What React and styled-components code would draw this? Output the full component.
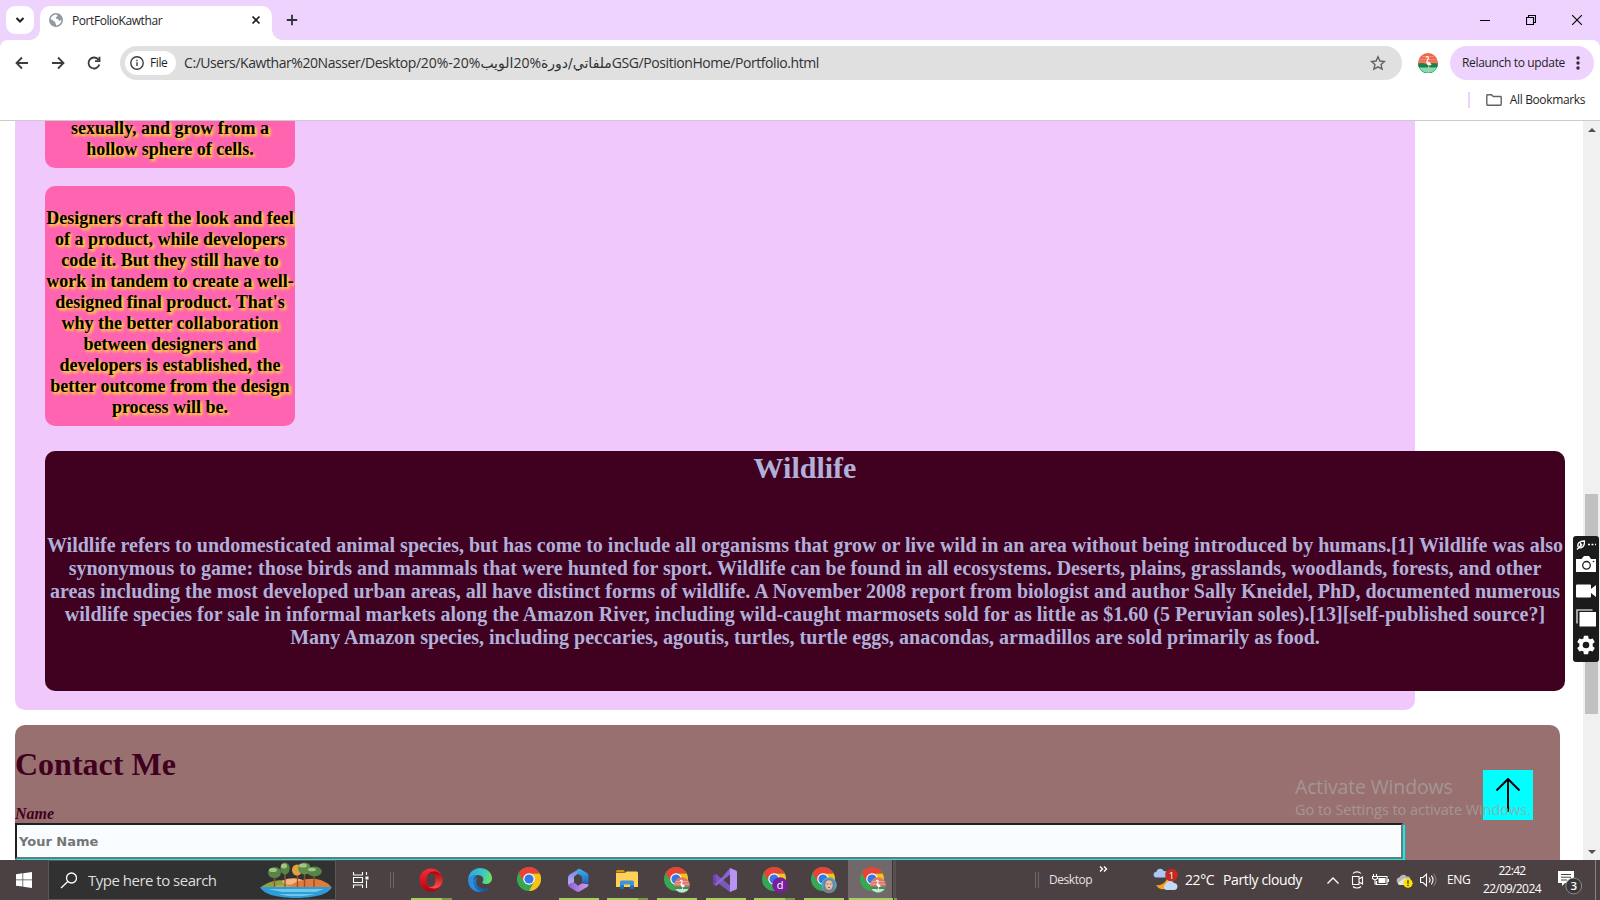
import React from "react";
import styled, { createGlobalStyle } from "styled-components";

const ui = `"Open Sans", "DejaVu Sans", sans-serif`;
const serif = `"Liberation Serif", "Times New Roman", serif`;

const GlobalStyle = createGlobalStyle`
  *, *::before, *::after { box-sizing: border-box; }
  body { margin: 0; overflow: hidden; background: #fff; font-family: ${ui}; }
  svg { display: block; flex: none; }
  h1, h2, p { margin: 0; }
  button { border: 0; background: none; padding: 0; font: inherit; color: inherit; }
`;

const Screen = styled.div`
  position: relative;
  width: 1600px;
  height: 900px;
  display: flex;
  flex-direction: column;
  overflow: hidden;
`;

const Label = styled.span`
  font-size: ${(p) => p.$size || 12}px;
  font-weight: ${(p) => p.$weight || 400};
  letter-spacing: ${(p) => p.$track || 0}px;
  color: ${(p) => p.$color || "#1f1f1f"};
  line-height: 1.3;
  padding-top: ${(p) => p.$drop || 0}px;
  white-space: nowrap;
  width: ${(p) => (p.$width ? p.$width + "px" : "auto")};
  flex: none;
`;

/* ---------- browser frame ---------- */

const TabStrip = styled.header`
  height: 40px;
  flex: none;
  display: flex;
  align-items: flex-end;
  padding-left: 6px;
  background: #edd3fe;
`;

const TabSearch = styled.button`
  width: 28px;
  height: 28px;
  margin: 0 6px 6px 0;
  border-radius: 9px;
  background: #fff;
  display: grid;
  place-items: center;
`;

const Tab = styled.div`
  position: relative;
  width: 232px;
  height: 34px;
  padding: 0 10px 6px 9px;
  border-radius: 10px 10px 0 0;
  background: #fff;
  display: flex;
  align-items: center;

  &::before, &::after {
    content: "";
    position: absolute;
    bottom: 0;
    width: 10px;
    height: 10px;
  }
  &::before { left: -10px; background: radial-gradient(circle at 0 0, transparent 9.5px, #fff 10px); }
  &::after { right: -10px; background: radial-gradient(circle at 100% 0, transparent 9.5px, #fff 10px); }
`;

const TabTitle = styled(Label)`
  flex: 1;
  margin-left: 9px;
`;

const NewTab = styled.button`
  margin: 0 0 14px 14px;
`;

const WindowControls = styled.div`
  display: flex;
  align-items: center;
  height: 40px;
  margin-left: auto;
`;

const WindowButton = styled.button`
  width: 46px;
  height: 40px;
  display: grid;
  place-items: center;
`;

const ToolbarFrame = styled.div`
  height: 46px;
  flex: none;
  background: #edd3fe;
`;

const Toolbar = styled.div`
  height: 46px;
  display: flex;
  align-items: center;
  padding: 0 6px 0 14px;
  border-radius: 8px 8px 0 0;
  background: #fff;
`;

const NavButton = styled.button`
  width: 16px;
  height: 16px;
  margin-right: ${(p) => p.$gap}px;
`;

const AddressBar = styled.div`
  width: 1282px;
  height: 34px;
  display: flex;
  align-items: center;
  padding: 0 16px 0 5px;
  border-radius: 17px;
  background: #e0e0e0;
`;

const FileChip = styled.div`
  width: 51px;
  height: 24px;
  margin-right: 8px;
  padding-left: 5px;
  display: flex;
  align-items: center;
  gap: 6px;
  border-radius: 12px;
  background: #fff;
`;

const Url = styled.div`
  flex: 1;
  direction: ltr;
  font-size: 14px;
  letter-spacing: -0.43px;
  line-height: 20px;
  white-space: nowrap;
  color: #303133;
`;

const ArabicText = styled.span`
  font-family: "DejaVu Sans", sans-serif;
  letter-spacing: 0;
`;

const Avatar = styled.div`
  margin: 0 12px 0 16px;
`;

const RelaunchButton = styled.button`
  width: 144px;
  height: 34px;
  display: flex;
  align-items: center;
  justify-content: space-between;
  padding: 0 14px 0 12px;
  border-radius: 17px;
  background: #edd3fe;
`;

const BookmarksBar = styled.div`
  height: 35px;
  flex: none;
  display: flex;
  align-items: center;
  justify-content: flex-end;
  padding: 0 15px 6px 0;
  border-bottom: 1px solid #cccccc;
  background: #fff;
`;

const BookmarkDivider = styled.div`
  width: 2px;
  height: 16px;
  margin-right: 16px;
  background: #edd3fe;
`;

const BookmarkLabel = styled(Label)`
  margin-left: 8px;
`;

/* ---------- web page ---------- */

const Viewport = styled.main`
  height: 739px;
  flex: none;
  display: flex;
  overflow: hidden;
`;

const Page = styled.div`
  width: 1583px;
  padding-left: 15px;
  overflow: hidden;
  background: #fff;
  font-family: ${serif};
`;

const Portfolio = styled.section`
  width: 1400px;
  height: 589px;
  padding-left: 30px;
  border-radius: 0 0 10px 10px;
  background: #f0c8fb;
`;

const PinkCard = styled.article`
  width: 250px;
  height: ${(p) => p.$height}px;
  display: flex;
  flex-direction: column;
  justify-content: flex-end;
  margin-bottom: ${(p) => p.$after}px;
  padding-bottom: 8px;
  border-radius: ${(p) => (p.$cut ? "0 0 10px 10px" : "10px")};
  background: #ff64b1;
`;

const CardText = styled.p`
  font-size: 18px;
  font-weight: 700;
  line-height: 21px;
  text-align: center;
  white-space: nowrap;
  color: #000;
  text-shadow: 2px 2px 3px yellow;
`;

const WildlifeCard = styled.article`
  width: 1520px;
  height: 240px;
  border-radius: 10px;
  background: #400020;
  color: #b0b0d8;
  text-align: center;
`;

const WildlifeTitle = styled.h2`
  font-size: 30px;
  line-height: 34px;
  padding-bottom: 49px;
`;

const WildlifeText = styled.p`
  font-size: 20px;
  font-weight: 700;
  line-height: 23px;
  white-space: nowrap;
`;

const Contact = styled.section`
  width: 1545px;
  height: 200px;
  margin-top: 15px;
  padding-top: 21px;
  border-radius: 10px 10px 0 0;
  background: #98706f;
  color: #400020;
`;

const ContactTitle = styled.h1`
  font-size: 32px;
  line-height: 37px;
  margin-bottom: 21px;
`;

const FieldLabel = styled.label`
  display: block;
  font-size: 16px;
  font-style: italic;
  font-weight: 700;
  line-height: 19px;
`;

const NameInput = styled.input`
  display: block;
  width: 1388px;
  height: 36px;
  padding: 0 2px;
  border: 2px solid;
  border-color: #1f2020 #767676 #767676 #1f2020;
  border-radius: 0;
  outline: 0;
  background: #fafdff;
  box-shadow: 2px 2px 0 #00f5f0;
  font: 700 13px "DejaVu Sans", Verdana, sans-serif;

  &::placeholder { color: #757575; opacity: 1; }
`;

const Scrollbar = styled.div`
  width: 17px;
  display: flex;
  flex-direction: column;
  align-items: center;
  padding: 7px 0 6px;
  background: #f0f0f0;
`;

const ScrollThumb = styled.div`
  width: 13px;
  height: 220px;
  margin: 362px 0 auto;
  background: #c1c1c1;
`;

/* ---------- floating layers ---------- */

const TopButton = styled.button`
  position: absolute;
  left: 1483px;
  top: 770px;
  width: 50px;
  height: 50px;
  display: grid;
  place-items: center;
  background: #00ffff;
`;

const Watermark = styled.div`
  position: absolute;
  left: 1295px;
  top: 774px;
  display: flex;
  flex-direction: column;
  gap: 2px;
`;

const CapturePanel = styled.aside`
  position: absolute;
  left: 1573px;
  top: 536px;
  width: 26px;
  height: 126px;
  display: flex;
  flex-direction: column;
  align-items: center;
  padding-top: 3px;
  border-radius: 3px;
  background: #1b1b1b;
`;

const CaptureTool = styled.button`
  width: 20px;
  height: ${(p) => p.$height}px;
  display: grid;
  place-items: center;
`;

/* ---------- taskbar ---------- */

const Taskbar = styled.footer`
  height: 40px;
  flex: none;
  display: flex;
  background: #4b4142;
`;

const StartButton = styled.button`
  width: 48px;
  display: grid;
  place-items: center;
`;

const SearchBox = styled.div`
  width: 288px;
  display: flex;
  align-items: center;
  padding: 0 3px 0 11px;
  border: 1px solid #5c5758;
  background: #313131;
`;

const SearchLabel = styled(Label)`
  flex: 1;
  margin-left: 11px;
`;

const TaskViewButton = styled.button`
  width: 17px;
  margin: 0 0 0 16px;
  display: grid;
  place-items: center;
`;

const Grip = styled.div`
  width: 4px;
  height: 16px;
  align-self: center;
  margin: ${(p) => p.$margin};
  border: solid #6f6768;
  border-width: 0 1px;
`;

const Apps = styled.nav`
  display: flex;
`;

const AppButton = styled.div`
  width: 49px;
  display: grid;
  grid-template: 1fr 2px / 1fr;
  justify-items: center;
  background: ${(p) => (p.$active ? "linear-gradient(90deg, #716969 0 44px, #3b3334 44px 45px, #575051 45px 48px, transparent 48px)" : "transparent")};
`;

const AppIcon = styled.div`
  align-self: center;
  margin: 2px 1px 0 0;
`;

const Running = styled.div`
  width: ${(p) => (p.$stacked ? 41 : 40)}px;
  height: 2px;
  background: ${(p) => (p.$stacked ? "linear-gradient(90deg, #a7cf5c 0 31px, #7c9a45 31px)" : "#a7cf5c")};
  ${(p) => p.$wide && "width: 48px; background: linear-gradient(90deg, #a7cf5c 0 44px, #3b3334 44px 45px, #7c9a45 45px);"}
`;

const Tray = styled.div`
  display: flex;
  align-items: center;
  margin-left: auto;
`;

const Chevrons = styled.div`
  align-self: flex-start;
  margin: 6px 45px 0 7px;
`;

const Spacer = styled.div`
  width: ${(p) => p.$w}px;
  flex: none;
`;

const Clock = styled.div`
  width: 62px;
  display: flex;
  flex-direction: column;
  align-items: center;
  gap: 2px;
`;

const NotificationCenter = styled.div`
  padding-top: 4px;
`;

const ShowDesktop = styled.div`
  width: 5px;
  height: 40px;
  border-left: 1px solid #8a8384;
`;

/* ---------- drawings ---------- */

const Globe = () => (
  <svg width="14" height="14" viewBox="0 0 14 14">
    <circle cx="7" cy="7" r="7" fill="#8f9aa1" />
    <path d="M6.800 1.500C9 1.600 8.800 3.700 7 4.300 6.400 4.800 6.800 5.800 8.200 6c1.400.2 1.600.8 1.600 1.800 1.200 0 1.800-.5 2.700-.8-.2 3-2.500 5.400-5.500 5.500V10.800c-1-.2-1-1.300-.8-2.200C5.200 8.400 4 7.700 3.300 6.700L1.500 6.300C2 3.600 4 1.700 6.800 1.500z" fill="#fff" />
  </svg>
);

const Line = ({ w = 16, h = w, box, d, color = "#3c3c3c", sw = 1.8, fill = "none", children, ...rest }) => (
  <svg width={w} height={h} viewBox={box || `0 0 ${w} ${h}`} fill={fill} stroke={color} strokeWidth={sw} {...rest}>
    <path d={d} />
    {children}
  </svg>
);

const Flamingo = ({ size = 20 }) => (
  <svg width={size} height={size} viewBox="0 0 20 20">
    <circle cx="10" cy="10" r="10" fill="#ee674c" />
    <path d="M4 3.500h12M1.500 6.500h17M.5 9h19" stroke="#f78c70" strokeWidth="1" />
    <path d="M0 10.500 5 10l4 1.500 4-1.500 7 .5A10 10 0 0 1 0 10.500z" fill="#15834b" />
    <path d="M1.200 14.500h17.600A10 10 0 0 1 1.200 14.500z" fill="#7be0ae" />
    <path d="M8 4.600C8.500 3 10.800 3.200 10.400 5.200 10.100 6.700 8.600 7.800 8.800 9.600" fill="none" stroke="#fff0ea" strokeWidth="1.300" />
    <path d="M8.200 9c1.200-1 3.800-.6 5.400 2.600-1.200 1.400-5 1.700-5.400-2.600z" fill="#fff0ea" />
    <path d="M10.600 12.500l-.4 6M10.500 15.500l1.700-1.500" stroke="#f7b0a0" strokeWidth=".9" fill="none" />
  </svg>
);

const ChromeMark = () => (
  <>
    <circle cx="12" cy="12" r="12" fill="#34a853" />
    <path d="M12 6.500h10.700A12 12 0 0 1 12 24l5-9z" fill="#fbc116" />
    <path d="M1.600 6A12 12 0 0 1 22.700 6.500H12L7 15z" fill="#ea4335" />
    <circle cx="12" cy="12" r="5.800" fill="#fff" />
    <circle cx="12" cy="12" r="4.600" fill="#3478e8" />
  </>
);

const Chrome = ({ badge }) => (
  <svg width="30" height="28" viewBox="-3 -1 30 28">
    <ChromeMark />
    {badge === "bird" && (
      <g>
        <circle cx="18" cy="18" r="7.800" fill="#d9786a" />
        <path d="M11.500 14.500h13M10.500 17h15" stroke="#eda093" strokeWidth="1" />
        <path d="M10.300 19.500h15.400a7.800 7.800 0 0 1-15.400 0z" fill="#3f8f5d" />
        <path d="M11.500 22h13a7.800 7.800 0 0 1-13 0z" fill="#b9e8cb" />
        <path d="M16.300 14c.5-1.300 2.200-.9 1.900.5-.3 1.200-1.200 1.900-1.100 3.200" fill="none" stroke="#fff" strokeWidth="1.100" />
        <path d="M16.600 17.300c1-.8 3.200-.3 4.300 2-1 1.200-4 1.300-4.300-2z" fill="#fff" />
        <path d="M18.600 20l-.3 4.800" stroke="#f6d3cb" strokeWidth=".9" />
      </g>
    )}
    {badge === "letter" && (
      <g>
        <circle cx="18" cy="18" r="7.800" fill="#7a1ea1" />
        <text x="18" y="22" textAnchor="middle" fontSize="11" fontFamily="Open Sans, sans-serif" fill="#fff">d</text>
      </g>
    )}
    {badge === "face" && (
      <g>
        <circle cx="18" cy="18" r="7.800" fill="#4aa6d8" />
        <path d="M12.500 24V17c0-7 11-7 11 0v7a8 8 0 0 1-11 0z" fill="#75828c" />
        <ellipse cx="18" cy="18" rx="3.700" ry="4.800" fill="#e7bfa6" />
        <path d="M15.600 17h1.500M18.900 17h1.500M17 20.500h2" stroke="#6b4436" strokeWidth=".8" />
      </g>
    )}
  </svg>
);

const Opera = () => (
  <svg width="24" height="24" viewBox="0 0 24 24">
    <defs>
      <linearGradient id="operaRing" x1="0" y1="0" x2="0" y2="1"><stop stopColor="#ff2a36" /><stop offset="1" stopColor="#b3000e" /></linearGradient>
      <linearGradient id="operaSide" x1="0" y1="0" x2="0" y2="1"><stop stopColor="#a3060e" /><stop offset="1" stopColor="#ff5450" /></linearGradient>
    </defs>
    <path fillRule="evenodd" d="M12 .5a11.500 11.500 0 1 0 0 23 11.500 11.500 0 1 0 0-23zM12 4.500c2.700 0 4.500 3.300 4.500 7.500s-1.800 7.500-4.500 7.500S7.500 16.200 7.500 12 9.300 4.500 12 4.500z" fill="url(#operaRing)" />
    <path d="M9.300 5.700C13 1.600 23.500 2.800 23.500 12S13 22.400 9.300 18.300c4 2.500 7.200-1.200 7.200-6.300S13.300 3.200 9.300 5.700z" fill="url(#operaSide)" />
  </svg>
);

const Edge = () => (
  <svg width="24" height="24" viewBox="0 0 24 24">
    <defs>
      <linearGradient id="edgeTop" x1="0" y1=".3" x2="1" y2=".5"><stop stopColor="#2fa6e8" /><stop offset=".6" stopColor="#39c8c4" /><stop offset="1" stopColor="#6be35c" /></linearGradient>
      <linearGradient id="edgeBody" x1="0" y1="0" x2="1" y2="1"><stop stopColor="#2285d8" /><stop offset="1" stopColor="#124f94" /></linearGradient>
    </defs>
    <path d="M0 11.500C.6 5 5.500 0 12 0c7.500 0 12 5.200 12 10 0 4-3 6-6.200 6-3 0-4.200-1-3.200-2.200 2.200-3.500-.6-6.800-5-6.800C5 7 1.500 9 0 11.500z" fill="url(#edgeTop)" />
    <path d="M0 11.500C2 7.500 6 6.500 9.500 7c-4 2-5.200 7-2.500 11.500 1.500 2.500 4 4.700 7 5.300C6.500 25 0 19.500 0 11.500z" fill="#2a8fde" />
    <path d="M10.500 9.200C7 11 7.500 17 11.500 19.500c3.500 2.200 7.500 1.700 11-.8C20.500 22 17 24 13 24 7.500 22.500 4.500 17.500 6 12.500c.8-2 2.600-3.300 4.500-3.300z" fill="url(#edgeBody)" />
  </svg>
);

const Copilot365 = () => (
  <svg width="22" height="24" viewBox="0 0 22 24">
    <defs>
      <linearGradient id="mLeft" x1="0" y1="0" x2="0" y2="1"><stop stopColor="#6d8fe6" /><stop offset="1" stopColor="#c3a4f2" /></linearGradient>
      <linearGradient id="mRight" x1="0" y1="0" x2="0" y2="1"><stop stopColor="#35b8ee" /><stop offset="1" stopColor="#2455b8" /></linearGradient>
      <linearGradient id="mBase" x1="0" y1="0" x2="1" y2="0"><stop stopColor="#8d5fd3" /><stop offset="1" stopColor="#cf9cf0" /></linearGradient>
    </defs>
    <path d="M12 1 3 6.200Q1 7.400 1 9.500v7.300l6-2.600V9.500q0-1.200 1-1.800L12 5z" fill="url(#mLeft)" />
    <path d="M10.500 1.200Q12 .4 13.500 1.200L20 5q1.500 1 1.500 2.800v9L15 14V9.500q0-1.200-1-1.800l-3.500-2z" fill="url(#mRight)" />
    <path d="M1 16.500l6-2.300 4 3.500 4-2.500 6.500 1.300q0 1.500-1.500 2.500l-7.500 4.400q-1.500.8-3 0L2.500 19Q1 18 1 16.500z" fill="url(#mBase)" />
  </svg>
);

const Explorer = () => (
  <svg width="22" height="20" viewBox="0 0 22 20">
    <path d="M0 1.500Q0 0 1.500 0h6l2 2.500H0z" fill="#d89313" />
    <path d="M0 3h9l1.500-1.500H20.500Q22 1.500 22 3v14H0z" fill="#ffd257" />
    <path d="M4 19v-7q0-1.500 1.500-1.500h11q1.500 0 1.500 1.500v7h-4v-4.500H8V19z" fill="#3d94db" />
    <path d="M4 19v-3.500h4V19zM14 19v-3.500h4V19z" fill="#1f6fb8" />
  </svg>
);

const VisualStudio = () => (
  <svg width="24" height="24" viewBox="0 0 24 24">
    <path d="M0 7.500 3 6l14 11.500V24L1.500 12.500z" fill="#7c58bd" />
    <path d="M0 7.500 2.500 6v12L0 16.500z" fill="#6a45a8" />
    <path d="M17 0v6.500L3 18l-1.500-2L9 9.500z" fill="#8d63d6" />
    <path d="M17 0l6 2.500q1 .5 1 1.500v16q0 1-1 1.500L17 24z" fill="#b893f5" />
  </svg>
);

const Island = () => (
  <svg width="72" height="36" viewBox="0 0 72 36">
    <path d="M0 25h72C69 32 55 36 36 36S3 32 0 25z" fill="#2f9bd8" />
    <path d="M8 27h56l-8 3H22zM18 32h38l-12 2H28z" fill="#7ed3ee" opacity=".8" />
    <path d="M1 25c8-6 20-9 32-5l8 5z" fill="#8aa343" />
    <path d="M22 19c8-4 18-3 22 0l-4 5-16-2z" fill="#f5b77e" />
    <path d="M28 25c8-6 18-9 28-8 6 1 13 4 15 8z" fill="#e07b3e" />
    <path d="M14 25c5-3 12-3 18 0z" fill="#c9a04c" />
    <path d="M14.500 12v13M25 9v16M37.500 12v13M44.500 9v16M54 13v12" stroke="#9a4f2c" strokeWidth="1.400" />
    <g fill="#568548">
      <ellipse cx="14.500" cy="10.500" rx="6.500" ry="5.500" /><ellipse cx="25" cy="6.500" rx="4.700" ry="6" />
      <ellipse cx="54.500" cy="9.500" rx="7.300" ry="5" />
    </g>
    <ellipse cx="37" cy="8" rx="5" ry="5.500" fill="#e2a23b" />
    <ellipse cx="44.500" cy="6.500" rx="6.300" ry="6" fill="#5d8f49" />
    <g fill="#a6c583">
      <ellipse cx="13" cy="8" rx="4" ry="2" /><ellipse cx="24" cy="4" rx="3" ry="2.500" />
      <ellipse cx="43" cy="3.500" rx="4" ry="2" /><ellipse cx="52" cy="7.500" rx="4" ry="1.800" />
    </g>
  </svg>
);

const Weather = () => (
  <svg width="25" height="24" viewBox="0 0 25 24">
    <path d="M15 7a8 8 0 1 1-12 10c6 1 11-3 12-10z" fill="#f5a01f" />
    <path d="M2.500 9.500a3 3 0 0 1 .8-5.800 4 4 0 0 1 7.400-.7A3.300 3.300 0 0 1 12 9.500z" fill="#a9c8f5" />
    <path d="M13 22a3.200 3.200 0 0 1-.3-6 4.500 4.500 0 0 1 8.300-1 3.600 3.600 0 0 1 1 7z" fill="#c3d8fa" />
    <circle cx="18.500" cy="7" r="6.300" fill="#c42b1f" />
    <text x="18.500" y="10.500" textAnchor="middle" fontSize="9.500" fontFamily="Open Sans, sans-serif" fill="#fff">1</text>
  </svg>
);

const Gear = () => (
  <svg width="20" height="20" viewBox="0 0 24 24" fill="#fff">
    <path fillRule="evenodd" d="M9.500 1h5l.6 3.200 1.800 1 3.100-1.100 2.500 4.300-2.500 2.100v3l2.500 2.100-2.500 4.300-3.100-1.100-1.800 1-.6 3.200h-5l-.6-3.200-1.800-1L4 19.900l-2.500-4.300L4 13.500v-3L1.500 8.400 4 4.100l3.100 1.100 1.800-1zM12 8a4 4 0 1 0 0 8 4 4 0 0 0 0-8z" />
  </svg>
);

const apps = [
  { id: "opera", icon: <Opera />, running: true, stacked: true },
  { id: "edge", icon: <Edge /> },
  { id: "chrome", icon: <Chrome /> },
  { id: "m365", icon: <Copilot365 />, running: true },
  { id: "explorer", icon: <Explorer />, running: true, stacked: true },
  { id: "chrome-bird", icon: <Chrome badge="bird" />, running: true },
  { id: "vs", icon: <VisualStudio />, running: true },
  { id: "chrome-d", icon: <Chrome badge="letter" />, running: true, stacked: true },
  { id: "chrome-face", icon: <Chrome badge="face" />, running: true },
  { id: "chrome-active", icon: <Chrome badge="bird" />, running: true, active: true },
];

const BrowserFrame = () => (
  <>
    <TabStrip>
      <TabSearch><Line w={10} h={8} d="M1.500 2 5 5.500 8.500 2" color="#1f1f1f" sw={2} /></TabSearch>
      <Tab>
        <Globe />
        <TabTitle $track={-0.42} $drop={2}>PortFolioKawthar</TabTitle>
        <Line w={12} d="M2.500 2.500l7 7M9.500 2.500l-7 7" sw={1.7} color="#1f1f1f" />
      </Tab>
      <NewTab><Line w={12} d="M6 .8v10.400M.8 6h10.400" color="#303030" /></NewTab>
      <WindowControls>
        <WindowButton><Line w={10} h={10} d="M0 5.500h10" color="#000" sw={1} /></WindowButton>
        <WindowButton><Line w={10} d="M.5 2.500h7v7h-7zM2.500 2.500v-2h7v7h-2" color="#000" sw={1.1} /></WindowButton>
        <WindowButton><Line w={10} d="M0 0l10 10M10 0L0 10" color="#000" sw={1.1} /></WindowButton>
      </WindowControls>
    </TabStrip>
    <ToolbarFrame>
      <Toolbar>
        <NavButton $gap={20}><Line d="M14 8H3M8 2.500 2.500 8 8 13.500" /></NavButton>
        <NavButton $gap={20}><Line d="M2 8h11M8 2.500 13.500 8 8 13.500" /></NavButton>
        <NavButton $gap={18}><Line d="M13.300 9.500a5.500 5.500 0 1 1-.8-4.700M13.500 1.800v4.400H9" /></NavButton>
        <AddressBar>
          <FileChip>
            <Line w={14} d="M7 .8a6.200 6.200 0 1 0 0 12.400A6.200 6.200 0 0 0 7 .8zM7 6.300V10M7 3.800v1.400" sw={1.4} />
            <Label $weight={500} $track={-0.4}>File</Label>
          </FileChip>
          <Url>
            C:/Users/Kawthar%20Nasser/Desktop/<ArabicText>ملفاتي/دورة</ArabicText>%20<ArabicText>الويب</ArabicText>%20-%20GSG/PositionHome/Portfolio.html
          </Url>
          <Line w={16} d="M8 1.800 9.900 6l4.600.5-3.400 3.100 1 4.500L8 11.800l-4.100 2.300 1-4.500L1.500 6.500 6.100 6z" color="#5f6368" sw={1.4} />
        </AddressBar>
        <Avatar><Flamingo /></Avatar>
        <RelaunchButton>
          <Label $track={-0.34}>Relaunch to update</Label>
          <svg width="4" height="14" viewBox="0 0 4 14" fill="#303030"><circle cx="2" cy="2" r="1.700" /><circle cx="2" cy="7" r="1.700" /><circle cx="2" cy="12" r="1.700" /></svg>
        </RelaunchButton>
      </Toolbar>
    </ToolbarFrame>
    <BookmarksBar>
      <BookmarkDivider />
      <Line w={16} h={12} d="M.8 1.500q0-.7.7-.7h4l1.700 1.700h7.300q.7 0 .7.700v7.300q0 .7-.7.7h-13q-.7 0-.7-.7z" color="#5f6368" sw={1.4} />
      <BookmarkLabel $track={-0.37}>All Bookmarks</BookmarkLabel>
    </BookmarksBar>
  </>
);

const WebPage = () => (
  <Viewport>
    <Page>
      <Portfolio>
        <PinkCard $height={47} $after={18} $cut>
          <CardText>sexually, and grow from a<br />hollow sphere of cells.</CardText>
        </PinkCard>
        <PinkCard $height={240} $after={25}>
          <CardText>
            Designers craft the look and feel<br />of a product, while developers<br />code it. But they still have to<br />
            work in tandem to create a well-<br />designed final product. That's<br />why the better collaboration<br />
            between designers and<br />developers is established, the<br />better outcome from the design<br />process will be.
          </CardText>
        </PinkCard>
        <WildlifeCard>
          <WildlifeTitle>Wildlife</WildlifeTitle>
          <WildlifeText>
            Wildlife refers to undomesticated animal species, but has come to include all organisms that grow or live wild in an area without being introduced by humans.[1] Wildlife was also<br />
            synonymous to game: those birds and mammals that were hunted for sport. Wildlife can be found in all ecosystems. Deserts, plains, grasslands, woodlands, forests, and other<br />
            areas including the most developed urban areas, all have distinct forms of wildlife. A November 2008 report from biologist and author Sally Kneidel, PhD, documented numerous<br />
            wildlife species for sale in informal markets along the Amazon River, including wild-caught marmosets sold for as little as $1.60 (5 Peruvian soles).[13][self-published source?]<br />
            Many Amazon species, including peccaries, agoutis, turtles, turtle eggs, anacondas, armadillos are sold primarily as food.
          </WildlifeText>
        </WildlifeCard>
      </Portfolio>
      <Contact>
        <ContactTitle>Contact Me</ContactTitle>
        <FieldLabel htmlFor="name">Name</FieldLabel>
        <NameInput id="name" placeholder="Your Name" />
      </Contact>
    </Page>
    <Scrollbar>
      <svg width="8" height="4" viewBox="0 0 8 4"><path d="M4 0l4 4H0z" fill="#505050" /></svg>
      <ScrollThumb />
      <svg width="8" height="4" viewBox="0 0 8 4"><path d="M0 0h8L4 4z" fill="#505050" /></svg>
    </Scrollbar>
  </Viewport>
);

const SystemTaskbar = () => (
  <Taskbar>
    <StartButton>
      <svg width="16" height="16" viewBox="0 0 16 16" fill="#fff"><path d="M0 2.200 6.500 1.300v6.200H0zM7.200 1.200 16 0v7.500H7.200zM0 8.300h6.500v6.200L0 13.700zM7.200 8.300H16V16l-8.800-1.200z" /></svg>
    </StartButton>
    <SearchBox>
      <Line w={17} d="M11.500 1a5 5 0 1 0 0 10 5 5 0 0 0 0-10zM7.800 9.500 1 16" color="#fff" sw={1.3} />
      <SearchLabel $size={15} $track={-0.5} $drop={2} $color="#dedede">Type here to search</SearchLabel>
      <Island />
    </SearchBox>
    <TaskViewButton>
      <Line w={17} h={16} d="M1.500 0v3h9V0M1.500 16v-3h9v3M1.500 5.500h9v5h-9zM14.500 0v3M14.500 8.500V16" color="#fff" sw={1.1}>
        <path d="M13.500 4.500h3v3h-3z" fill="#fff" stroke="none" />
      </Line>
    </TaskViewButton>
    <Grip $margin="0 13px 0 21px" />
    <Apps>
      {apps.map((a) => (
        <AppButton key={a.id} $active={a.active}>
          <AppIcon>{a.icon}</AppIcon>
          {a.running && <Running $stacked={a.stacked} $wide={a.active} />}
        </AppButton>
      ))}
    </Apps>
    <Tray>
      <Grip $margin="0 10px 0 0" />
      <Label $size={12} $track={-0.45} $color="#e4e2e2" $width={43}>Desktop</Label>
      <Chevrons><Line w={9} h={6} d="M1 .5 3.500 3 1 5.500M5 .5 7.500 3 5 5.500" color="#fff" sw={1.4} /></Chevrons>
      <Weather />
      <Spacer $w={7} />
      <Label $size={14} $track={-0.4} $drop={1} $color="#fff" $width={38}>22°C</Label>
      <Label $size={14} $track={-0.38} $drop={1} $color="#fff" $width={79}>Partly cloudy</Label>
      <Spacer $w={25} />
      <Line w={12} h={7} d="M.5 6.500 6 1l5.500 5.500" color="#fff" sw={1.3} />
      <Spacer $w={12} />
      <Line w={13} h={18} d="M1.500 5.500h6.500v8H1.500zM8 8l3.500-2v7L8 11M2 2.500C4 .3 8 .3 10 2.500M2 15.500c2 2 6 2 8 0" color="#fff" sw={1.1} />
      <Spacer $w={8} />
      <Line w={17} h={12} d="M5 2.500h10v8H4.500V7M1.500 0v2.500M4.500 0v2.500M.5 2.500h5v2L3 6 .5 4.500zM3 6v4h2" color="#fff" sw={1.1}>
        <path d="M6.500 4h7v5h-7zM15.500 5h1.500v3h-1.500z" fill="#fff" stroke="none" />
      </Line>
      <Spacer $w={7} />
      <svg width="17" height="15" viewBox="0 0 17 15">
        <path d="M1 9c-1-2.500.5-4.500 2.500-4.500C5 1 9 1 10.500 3.500 13.500 3 15 5 14 8l-6 3H3z" fill="#b8b8b8" />
        <path d="M1.500 10 9 5l5 3-4 4H3z" fill="#e4e4e4" />
        <circle cx="12" cy="10.200" r="4.600" fill="#ffe100" />
        <path d="M12 7.200v3.600M12 11.800v1.300" stroke="#3b3300" strokeWidth="1.300" />
      </svg>
      <Spacer $w={7} />
      <Line w={17} h={14} d="M.6 4.500h2.400L6.500 1.200v11.600L3 9.500H.6zM9 4.500c1.300 1.500 1.300 3.500 0 5M11.300 2.700c2.200 2.700 2.200 5.900 0 8.600" color="#fff" sw={1.1}>
        <path d="M13.600 1c3.200 3.600 3.200 8.400 0 12" stroke="#8d8687" />
      </Line>
      <Spacer $w={10} />
      <Label $size={12} $track={-0.3} $color="#fff" $width={23}>ENG</Label>
      <Spacer $w={11} />
      <Clock>
        <Label $size={12} $track={-0.7} $color="#fff">22:42</Label>
        <Label $size={12} $track={-0.57} $color="#fff">22/09/2024</Label>
      </Clock>
      <Spacer $w={15} />
      <NotificationCenter>
        <svg width="25" height="26" viewBox="0 0 25 26">
          <path d="M0 2h16v12H7l-3 3v-3H0z" fill="#fff" />
          <path d="M3 5.500h10M3 8.200h10M3 11h6" stroke="#4b4142" strokeWidth="1" />
          <circle cx="15.700" cy="17" r="7.900" fill="#3b3637" stroke="#8f898a" />
          <text x="15.700" y="21" textAnchor="middle" fontSize="11.500" fontWeight="600" fontFamily="Open Sans, sans-serif" fill="#fff">3</text>
        </svg>
      </NotificationCenter>
      <Spacer $w={12} />
      <ShowDesktop />
    </Tray>
  </Taskbar>
);

export default function App() {
  return (
    <>
      <GlobalStyle />
      <Screen>
        <BrowserFrame />
        <WebPage />
        <SystemTaskbar />
        <TopButton><Line w={26} h={34} d="M13 34V1M1.500 12.500 13 1l11.500 11.500" color="#000" sw={2} /></TopButton>
        <Watermark>
          <Label $size={19.5} $track={-0.15} $color="rgba(168, 160, 160, 0.8)">Activate Windows</Label>
          <Label $size={14.5} $track={-0.05} $color="rgba(168, 160, 160, 0.8)">Go to Settings to activate Windows.</Label>
        </Watermark>
        <CapturePanel>
          <CaptureTool $height={11}>
            <Line w={20} h={10} d="M1 9.500 6 4M2 7C1 3 4 .8 8.500 1 9 6 5.500 9 2.500 7.500" color="#fff" sw={1.3}>
              <path d="M4.500 2.500 5 7M12 4.500h2M15.500 4.500h2M19 4.500h1" />
            </Line>
          </CaptureTool>
          <CaptureTool $height={28}>
            <svg width="20" height="16" viewBox="0 0 20 16">
              <path d="M0 3h5.500L8 0h5l2 3h5v13H0z" fill="#fff" />
              <circle cx="10.500" cy="9.300" r="3.800" fill="#fff" stroke="#1b1b1b" strokeWidth="1.300" />
              <circle cx="17.500" cy="5.500" r=".8" fill="#1b1b1b" />
            </svg>
          </CaptureTool>
          <CaptureTool $height={25}>
            <svg width="20" height="14" viewBox="0 0 20 14" fill="#fff"><path d="M0 1.500Q0 .5 1 .5h13q1 0 1 1V5l5-4v12l-5-4v3.500q0 1-1 1H1q-1 0-1-1z" /></svg>
          </CaptureTool>
          <CaptureTool $height={29}>
            <svg width="20" height="18" viewBox="0 0 20 18"><path d="M1 14.500V1h15.500" fill="none" stroke="#c4c4c4" strokeWidth="1.600" /><path d="M3.500 3H20v14.500H3.500z" fill="#fff" /></svg>
          </CaptureTool>
          <CaptureTool $height={26}><Gear /></CaptureTool>
        </CapturePanel>
      </Screen>
    </>
  );
}
